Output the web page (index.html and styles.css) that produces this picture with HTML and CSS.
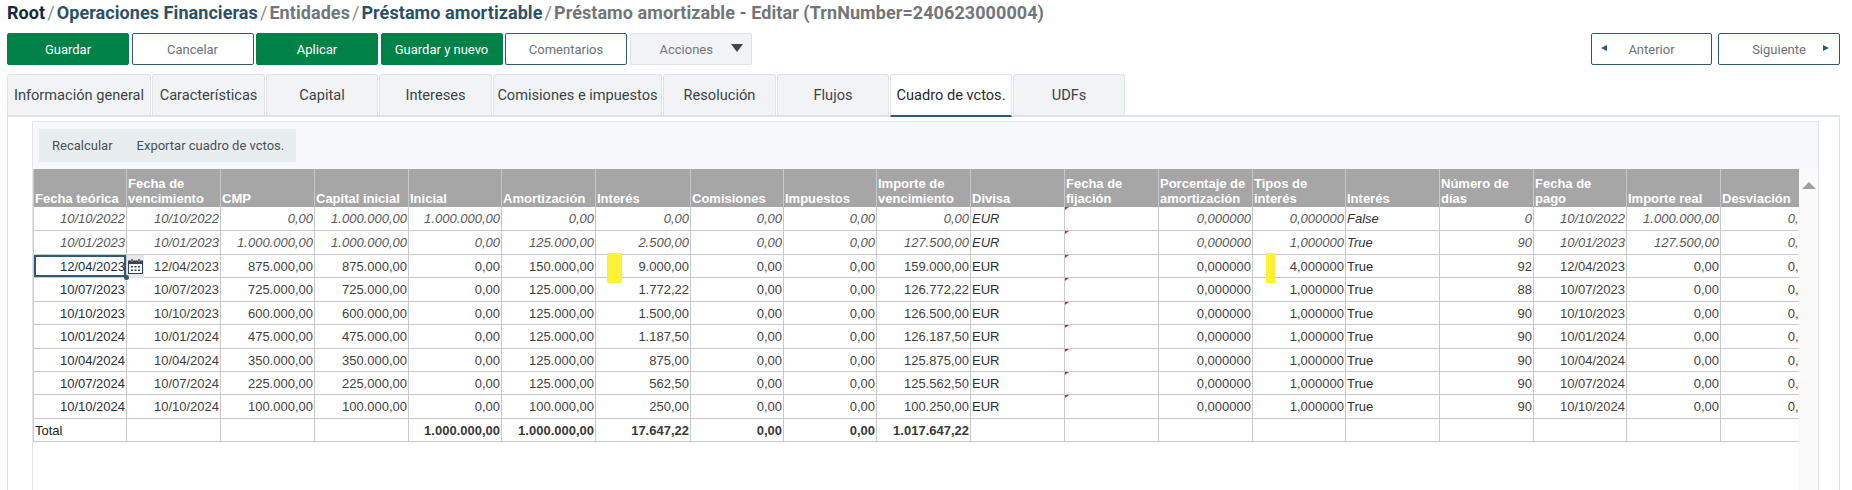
FILE: index.html
```html
<!DOCTYPE html>
<html lang="es">
<head>
<meta charset="utf-8">
<title>Préstamo amortizable - Editar</title>
<link rel="stylesheet" href="styles.css">
</head>
<body>
<div class="page">
  <nav class="crumbs">
    <a class="root">Root</a><i>/</i><a>Operaciones Financieras</a><i>/</i><a class="muted">Entidades</a><i>/</i><a>Préstamo amortizable</a><i>/</i><a class="muted">Préstamo amortizable - Editar (TrnNumber=240623000004)</a>
  </nav>
  <div class="actions">
    <button class="btn primary">Guardar</button>
    <button class="btn">Cancelar</button>
    <button class="btn primary">Aplicar</button>
    <button class="btn primary">Guardar y nuevo</button>
    <button class="btn">Comentarios</button>
    <button class="btn menu"><span>Acciones</span><b class="caret"></b></button>
    <div class="pager">
      <button class="btn pg"><b class="tri left"></b>Anterior</button>
      <button class="btn pg next">Siguiente<b class="tri right"></b></button>
    </div>
  </div>
  <div class="tabs">
    <div class="tab w144">Información general</div>
    <div class="tab w113">Características</div>
    <div class="tab w112">Capital</div>
    <div class="tab w113">Intereses</div>
    <div class="tab w169">Comisiones e impuestos</div>
    <div class="tab w113">Resolución</div>
    <div class="tab w112">Flujos</div>
    <div class="tab w122 active">Cuadro de vctos.</div>
    <div class="tab w112">UDFs</div>
  </div>
  <div class="content">
    <div class="panel">
      <div class="panel-head">
        <div class="tools"><span>Recalcular</span><span>Exportar cuadro de vctos.</span></div>
      </div>
      <div class="grid-wrap">
        <div class="clip">
          <table class="grid">
            <colgroup>
              <col class="c94"><col class="c94"><col class="c94"><col class="c94"><col class="c93"><col class="c94"><col class="c95"><col class="c93"><col class="c93"><col class="c94"><col class="c94"><col class="c94"><col class="c94"><col class="c93"><col class="c94"><col class="c94"><col class="c93"><col class="c94"><col class="c94">
            </colgroup>
            <thead>
              <tr><th>Fecha teórica</th><th>Fecha de vencimiento</th><th>CMP</th><th>Capital inicial</th><th>Inicial</th><th>Amortización</th><th>Interés</th><th>Comisiones</th><th>Impuestos</th><th>Importe de vencimiento</th><th>Divisa</th><th>Fecha de fijación</th><th>Porcentaje de amortización</th><th>Tipos de interés</th><th>Interés</th><th>Número de días</th><th>Fecha de pago</th><th>Importe real</th><th>Desviación</th></tr>
            </thead>
            <tbody>
              <tr class="tall past"><td>10/10/2022</td><td>10/10/2022</td><td>0,00</td><td>1.000.000,00</td><td>1.000.000,00</td><td>0,00</td><td>0,00</td><td>0,00</td><td>0,00</td><td>0,00</td><td class="l">EUR</td><td class="fix"></td><td>0,000000</td><td>0,000000</td><td class="l">False</td><td>0</td><td>10/10/2022</td><td>1.000.000,00</td><td>0,00</td></tr>
              <tr class="tall past"><td>10/01/2023</td><td>10/01/2023</td><td>1.000.000,00</td><td>1.000.000,00</td><td>0,00</td><td>125.000,00</td><td>2.500,00</td><td>0,00</td><td>0,00</td><td>127.500,00</td><td class="l">EUR</td><td class="fix"></td><td>0,000000</td><td>1,000000</td><td class="l">True</td><td>90</td><td>10/01/2023</td><td>127.500,00</td><td>0,00</td></tr>
              <tr><td class="focus">12/04/2023<span class="cal"><svg viewBox="0 0 15 15" width="15" height="15"><rect x="0.5" y="2" width="14" height="12.5" fill="#fff" stroke="#33475b"/><rect x="0.5" y="2" width="14" height="3" fill="#33475b"/><rect x="3" y="0" width="2" height="3" fill="#9a6a2f"/><rect x="10" y="0" width="2" height="3" fill="#9a6a2f"/><path d="M3 7h2v1.500H3zM6.500 7h2v1.500h-2zM10 7h2v1.500h-2zM3 10.500h2V12H3zM6.500 10.500h2V12h-2zM10 10.500h2V12h-2z" fill="#33475b"/></svg></span><span class="dot"></span></td><td>12/04/2023</td><td>875.000,00</td><td>875.000,00</td><td>0,00</td><td>150.000,00</td><td class="mark-a">9.000,00</td><td>0,00</td><td>0,00</td><td>159.000,00</td><td class="l">EUR</td><td class="fix"></td><td>0,000000</td><td class="mark-b">4,000000</td><td class="l">True</td><td>92</td><td>12/04/2023</td><td>0,00</td><td>0,00</td></tr>
              <tr class="tall"><td>10/07/2023</td><td>10/07/2023</td><td>725.000,00</td><td>725.000,00</td><td>0,00</td><td>125.000,00</td><td>1.772,22</td><td>0,00</td><td>0,00</td><td>126.772,22</td><td class="l">EUR</td><td class="fix"></td><td>0,000000</td><td>1,000000</td><td class="l">True</td><td>88</td><td>10/07/2023</td><td>0,00</td><td>0,00</td></tr>
              <tr><td>10/10/2023</td><td>10/10/2023</td><td>600.000,00</td><td>600.000,00</td><td>0,00</td><td>125.000,00</td><td>1.500,00</td><td>0,00</td><td>0,00</td><td>126.500,00</td><td class="l">EUR</td><td class="fix"></td><td>0,000000</td><td>1,000000</td><td class="l">True</td><td>90</td><td>10/10/2023</td><td>0,00</td><td>0,00</td></tr>
              <tr class="tall"><td>10/01/2024</td><td>10/01/2024</td><td>475.000,00</td><td>475.000,00</td><td>0,00</td><td>125.000,00</td><td>1.187,50</td><td>0,00</td><td>0,00</td><td>126.187,50</td><td class="l">EUR</td><td class="fix"></td><td>0,000000</td><td>1,000000</td><td class="l">True</td><td>90</td><td>10/01/2024</td><td>0,00</td><td>0,00</td></tr>
              <tr><td>10/04/2024</td><td>10/04/2024</td><td>350.000,00</td><td>350.000,00</td><td>0,00</td><td>125.000,00</td><td>875,00</td><td>0,00</td><td>0,00</td><td>125.875,00</td><td class="l">EUR</td><td class="fix"></td><td>0,000000</td><td>1,000000</td><td class="l">True</td><td>90</td><td>10/04/2024</td><td>0,00</td><td>0,00</td></tr>
              <tr><td>10/07/2024</td><td>10/07/2024</td><td>225.000,00</td><td>225.000,00</td><td>0,00</td><td>125.000,00</td><td>562,50</td><td>0,00</td><td>0,00</td><td>125.562,50</td><td class="l">EUR</td><td class="fix"></td><td>0,000000</td><td>1,000000</td><td class="l">True</td><td>90</td><td>10/07/2024</td><td>0,00</td><td>0,00</td></tr>
              <tr class="tall"><td>10/10/2024</td><td>10/10/2024</td><td>100.000,00</td><td>100.000,00</td><td>0,00</td><td>100.000,00</td><td>250,00</td><td>0,00</td><td>0,00</td><td>100.250,00</td><td class="l">EUR</td><td class="fix"></td><td>0,000000</td><td>1,000000</td><td class="l">True</td><td>90</td><td>10/10/2024</td><td>0,00</td><td>0,00</td></tr>
              <tr class="total"><td class="l">Total</td><td></td><td></td><td></td><td>1.000.000,00</td><td>1.000.000,00</td><td>17.647,22</td><td>0,00</td><td>0,00</td><td>1.017.647,22</td><td></td><td></td><td></td><td></td><td></td><td></td><td></td><td></td><td></td></tr>
            </tbody>
          </table>
        </div>
        <div class="scroll"><b class="up"></b></div>
      </div>
    </div>
  </div>
</div>
</body>
</html>
```
FILE: styles.css
```css
* { box-sizing: border-box; }
html, body { margin: 0; height: 100%; background: #fff; }
body { font-family: Roboto, "Liberation Sans", sans-serif; overflow: hidden; }
.page { height: 490px; overflow: hidden; padding: 0 12px 0 7px; display: flex; flex-direction: column; }

.crumbs { height: 33px; padding-top: 2px; display: flex; align-items: flex-start; font-size: 18px; line-height: 22px; font-weight: 700; letter-spacing: 0.07px; color: #2c5167; white-space: nowrap; }
.crumbs .root { color: #14283a; }
.crumbs .muted { color: #737679; }
.crumbs i { font-style: normal; font-weight: 400; color: #8a8d90; margin: 0 2px; }

.actions { display: flex; gap: 2.5px; height: 32px; flex: none; }
.btn { width: 122px; height: 32px; padding: 0; background: #fff; border: 1px solid #2f5a70; border-radius: 2px; font: 400 13px Roboto, "Liberation Sans", sans-serif; color: #6e7377; position: relative; }
.btn.primary { background: #008148; border-color: #008148; color: #fff; }
.btn.menu { background: #f2f3f4; border-color: #dfe3e6; color: #777; display: flex; align-items: center; padding-left: 29px; gap: 18px; }
.caret { width: 0; height: 0; border-left: 6px solid transparent; border-right: 6px solid transparent; border-top: 8px solid #444; margin-top: -2px; }
.pager { margin-left: auto; display: flex; gap: 6px; }
.btn.pg { width: 121px; }
.btn.pg.next { width: 122px; }
.tri { position: absolute; top: 11px; width: 0; height: 0; border-top: 3px solid transparent; border-bottom: 3px solid transparent; }
.tri.left { left: 9px; border-right: 6px solid #2f5a70; }
.tri.right { right: 10px; border-left: 6px solid #2f5a70; }

.tabs { display: flex; gap: 1px; margin-top: 9px; height: 41px; flex: none; position: relative; z-index: 1; }
.tab { height: 41px; display: flex; align-items: center; justify-content: center; background: #f1f3f5; border: 1px solid #dfe4e7; border-bottom: 0; border-radius: 3px 3px 0 0; font-size: 14.6px; color: #3c4348; white-space: nowrap; }
.w112 { width: 112px; }
.w113 { width: 113px; }
.w122 { width: 122px; }
.w144 { width: 144px; }
.w169 { width: 169px; }
.tab.active { background: #fff; color: #1f2a33; border-bottom: 2px solid #2f5a70; height: 43px; }

.content { flex: 1; min-height: 0; border-top: 2px solid #dde2e6; border-left: 1px solid #dde2e6; border-right: 1px solid #dde2e6; padding: 4px 20px 0 24px; }
.panel { height: 100%; border: 1px solid #e3e6e9; border-bottom: 0; background: #fff; display: flex; flex-direction: column; }
.panel-head { background: #f6f8fa; padding: 7px 6px 7px; flex: none; }
.tools { width: 257px; height: 33px; background: #e8edef; display: flex; align-items: center; gap: 24px; padding-left: 13px; font-size: 13px; color: #4a5157; }

.grid-wrap { display: flex; align-items: stretch; flex: 1; min-height: 0; }
.clip { width: 1766px; overflow: hidden; flex: none; }
.grid { table-layout: fixed; width: 1782px; border-collapse: separate; border-spacing: 0; font: 13px "Liberation Sans", Arial, sans-serif; color: #3f3f3f; }
.c93 { width: 93px; }
.c94 { width: 94px; }
.c95 { width: 95px; }
.grid th { height: 38px; vertical-align: bottom; text-align: left; background: #a6a6a6; color: #fff; font-weight: 700; line-height: 15px; padding: 0 1px 1px; border-right: 1px solid #c8c8c8; overflow: hidden; }
.grid td { height: 23px; padding: 0 1px; text-align: right; white-space: nowrap; border-right: 1px solid #c9c9c9; border-bottom: 1px solid #c9c9c9; position: relative; }
.grid tr.tall td { height: 24px; }
.grid th:first-child, .grid td:first-child { border-left: 1px solid #c9c9c9; }
.grid td:first-child { color: #23303c; }
.grid td.l { text-align: left; color: #2b2f33; }
.grid tr.past td { font-style: italic; color: #595959; }
.grid tr.past td.l { color: #333; }
.grid tr.total td { font-weight: 700; color: #3a3a3a; }
.grid tr.total td.l { font-weight: 400; color: #222; }
.fix::before { content: ""; position: absolute; top: 0; left: 0; border-top: 3px solid #c8283c; border-right: 4px solid transparent; }
.focus { box-shadow: inset 0 0 0 2px #2f5a70; }
.cal { position: absolute; left: 93px; top: 0; width: 17px; height: 23px; background: #e4e9ed; display: flex; align-items: center; justify-content: center; z-index: 2; }
.dot { position: absolute; right: -3px; bottom: -3px; width: 5px; height: 5px; border-radius: 50%; background: #2f5a70; z-index: 3; }
.mark-a::before, .mark-b::before { content: ""; position: absolute; top: -2px; height: 30px; background: #fff234; }
.mark-a::before { left: 11px; width: 15px; }
.mark-b::before { left: 13px; width: 9px; }

.scroll { flex: 1; background: #fafafa; position: relative; }
.up { position: absolute; top: 13px; left: 3px; width: 0; height: 0; border-left: 7px solid transparent; border-right: 7px solid transparent; border-bottom: 7px solid #a0a0a0; }
```
